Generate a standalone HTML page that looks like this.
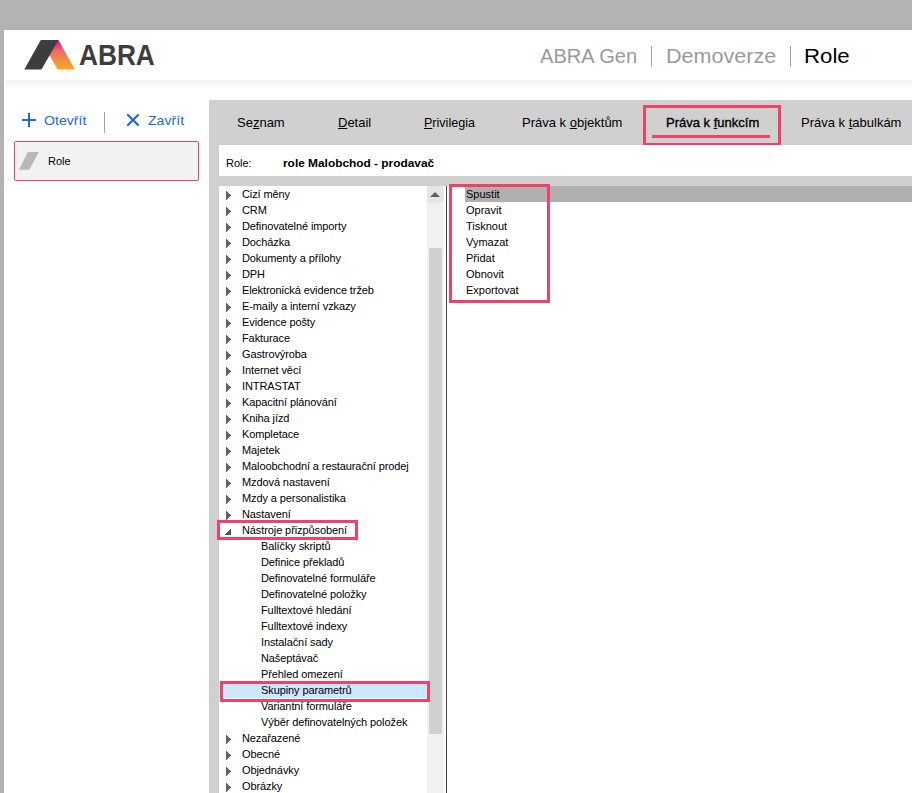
<!DOCTYPE html>
<html><head><meta charset="utf-8">
<style>
*{margin:0;padding:0;box-sizing:border-box}
html,body{width:912px;height:793px;overflow:hidden;background:#b3b3b3;font-family:"Liberation Sans",sans-serif}
.a{position:absolute;white-space:nowrap}
#main{position:absolute;left:4px;top:30px;width:908px;height:763px;background:#fff}
#shadow{position:absolute;left:5px;top:80px;width:907px;height:8px;background:linear-gradient(#f3f3f3,#fcfcfc)}
.hdr{font-size:19.5px;color:#9a9a9a;top:44px;line-height:24px;transform-origin:0 0}
.sep{position:absolute;width:1px;background:#9e9ec4}
.tb{font-size:13px;color:#1f6ad0;line-height:18px;top:111.5px;transform-origin:0 0;transform:scaleX(1.085)}
#panel{position:absolute;left:209px;top:100px;width:703px;height:693px;background:#d0d0d0}
.tab{font-size:13px;color:#000;line-height:16px;top:115px}
.tab u{text-decoration:underline;text-decoration-thickness:1px;text-underline-offset:1px}
.tree{position:absolute;left:219px;top:186px;width:227px;height:607px;background:#fff;overflow:hidden}
.row{position:absolute;left:0;height:16px;width:227px;font-size:11px;line-height:16px;color:#000;letter-spacing:-0.1px}
.row span{position:absolute;left:23px;top:0}
.row.c span{left:42px}
.tri{position:absolute;left:7px;top:5px;width:5px;height:9px;background:#636363;clip-path:polygon(0 0,1px 0,1px 1px,2px 1px,2px 2px,3px 2px,3px 3px,4px 3px,4px 4px,5px 4px,5px 5px,4px 5px,4px 6px,3px 6px,3px 7px,2px 7px,2px 8px,1px 8px,1px 9px,0 9px)}
.pink{position:absolute;border:3px solid #ee4368}
.etri{position:absolute;left:6px;top:7px;width:6px;height:6px;background:#555;clip-path:polygon(5px 0,6px 0,6px 6px,0 6px,0 5px,1px 5px,1px 4px,2px 4px,2px 3px,3px 3px,3px 2px,4px 2px,4px 1px,5px 1px)}
.sel{background:#cce8ff;width:208px}
.sb{position:absolute;left:208px;top:0;width:17px;height:607px;background:#f1f1f1}
.sbup{position:absolute;left:208px;top:0;width:17px;height:17px;background:#e6e6e6;border-radius:2px}
.sbarr{position:absolute;left:211px;top:6px;width:10px;height:5px;background:#606060;clip-path:polygon(50% 0,100% 100%,0 100%)}
.sbth{position:absolute;left:210px;top:62px;width:13px;height:486px;background:#d0d0d0;border-radius:1.5px}
.lst{position:absolute;left:447px;top:186px;width:465px;height:607px;background:#fff;overflow:hidden}
.lr{position:absolute;left:0;width:465px;height:16px;font-size:11px;line-height:16px;color:#000}
.lr span{position:absolute;left:19px;top:0}
</style></head><body>
<div id="main"></div>
<div id="shadow"></div>

<!-- logo -->
<svg class="a" style="left:0;top:0" width="160" height="80" viewBox="0 0 160 80">
  <defs><linearGradient id="g" x1="0" y1="0" x2="0" y2="1">
    <stop offset="0" stop-color="#e5007d"/><stop offset="0.35" stop-color="#ee6a6a"/><stop offset="1" stop-color="#f7ad1c"/></linearGradient></defs>
  <polygon points="41,40 58.4,40 75,69.6 57.6,69.6" fill="url(#g)"/>
  <polygon points="40.8,40 58.4,40 41.5,69.6 24.2,69.6" fill="#3d3d3d"/>
</svg>
<div class="a" style="left:79px;top:38px;font-size:30px;font-weight:bold;color:#3d3d3d;line-height:34px;transform-origin:0 0;transform:scaleX(0.875)">ABRA</div>

<div class="a hdr" style="left:540px;transform:scaleX(1.03)">ABRA Gen</div>
<div class="sep" style="left:651px;top:46px;height:21px"></div>
<div class="a hdr" style="left:666px;transform:scaleX(1.105)">Demoverze</div>
<div class="sep" style="left:790px;top:46px;height:21px"></div>
<div class="a hdr" style="left:803.5px;color:#000;transform:scaleX(1.14)">Role</div>

<!-- toolbar -->
<div class="a" style="left:22px;top:119px;width:14px;height:2px;background:#1f6ad0"></div>
<div class="a" style="left:28px;top:113px;width:2px;height:14px;background:#1f6ad0"></div>
<div class="a tb" style="left:44px">Otevřít</div>
<div class="sep" style="left:104px;top:112px;height:21px"></div>
<svg class="a" style="left:125px;top:112px" width="16" height="16" viewBox="0 0 16 16"><path d="M3 3L13 13M13 3L3 13" stroke="#1f6ad0" stroke-width="2.2" stroke-linecap="round"/></svg>
<div class="a tb" style="left:148px">Zavřít</div>

<div class="a" style="left:14px;top:141px;width:185px;height:40px;border:1px solid #ee4368;border-radius:2px;background:#f2f2f2"></div>
<svg class="a" style="left:19px;top:152px" width="20" height="18" viewBox="0 0 20 18"><polygon points="8.8,0 19.7,0 10.3,17.7 0,17.7" fill="#b8b8b8"/></svg>
<div class="a" style="left:48px;top:154px;font-size:11px;line-height:14px;color:#000">Role</div>

<!-- right panel -->
<div id="panel"></div>
<div class="a tab" style="left:237px">Se<u>z</u>nam</div>
<div class="a tab" style="left:338px"><u>D</u>etail</div>
<div class="a tab" style="left:424px;transform-origin:0 0;transform:scaleX(0.965)"><u>P</u>rivilegia</div>
<div class="a tab" style="left:522px">Práva k <u>o</u>bjektům</div>
<div class="a tab" style="left:666px;-webkit-text-stroke:0.35px #000">Práva k <u>f</u>unkcím</div>
<div class="a tab" style="left:801px">Práva k <u>t</u>abulkám</div>
<div class="pink" style="left:643px;top:105px;width:138px;height:41px"></div>
<div class="a" style="left:652px;top:135px;width:118px;height:3px;background:#ee4368"></div>

<div class="a" style="left:219px;top:145px;width:693px;height:31px;background:#fff"></div>
<div class="a" style="left:226px;top:156px;font-size:11px;line-height:14px">Role:</div>
<div class="a" style="left:283px;top:156px;font-size:11px;line-height:14px;font-weight:bold;transform-origin:0 0;transform:scaleX(1.08)">role Malobchod - prodavač</div>

<div class="tree" id="tree">
<div class="row" style="top:0px"><i class="tri"></i><span>Cizí měny</span></div>
<div class="row" style="top:16px"><i class="tri"></i><span>CRM</span></div>
<div class="row" style="top:32px"><i class="tri"></i><span>Definovatelné importy</span></div>
<div class="row" style="top:48px"><i class="tri"></i><span>Docházka</span></div>
<div class="row" style="top:64px"><i class="tri"></i><span>Dokumenty a přílohy</span></div>
<div class="row" style="top:80px"><i class="tri"></i><span>DPH</span></div>
<div class="row" style="top:96px"><i class="tri"></i><span>Elektronická evidence tržeb</span></div>
<div class="row" style="top:112px"><i class="tri"></i><span>E-maily a interní vzkazy</span></div>
<div class="row" style="top:128px"><i class="tri"></i><span>Evidence pošty</span></div>
<div class="row" style="top:144px"><i class="tri"></i><span>Fakturace</span></div>
<div class="row" style="top:160px"><i class="tri"></i><span>Gastrovýroba</span></div>
<div class="row" style="top:176px"><i class="tri"></i><span>Internet věcí</span></div>
<div class="row" style="top:192px"><i class="tri"></i><span>INTRASTAT</span></div>
<div class="row" style="top:208px"><i class="tri"></i><span>Kapacitní plánování</span></div>
<div class="row" style="top:224px"><i class="tri"></i><span>Kniha jízd</span></div>
<div class="row" style="top:240px"><i class="tri"></i><span>Kompletace</span></div>
<div class="row" style="top:256px"><i class="tri"></i><span>Majetek</span></div>
<div class="row" style="top:272px"><i class="tri"></i><span>Maloobchodní a restaurační prodej</span></div>
<div class="row" style="top:288px"><i class="tri"></i><span>Mzdová nastavení</span></div>
<div class="row" style="top:304px"><i class="tri"></i><span>Mzdy a personalistika</span></div>
<div class="row" style="top:320px"><i class="tri"></i><span>Nastavení</span></div>
<div class="row" style="top:336px"><i class="etri"></i><span>Nástroje přizpůsobení</span></div>
<div class="row c" style="top:352px"><span>Balíčky skriptů</span></div>
<div class="row c" style="top:368px"><span>Definice překladů</span></div>
<div class="row c" style="top:384px"><span>Definovatelné formuláře</span></div>
<div class="row c" style="top:400px"><span>Definovatelné položky</span></div>
<div class="row c" style="top:416px"><span>Fulltextové hledání</span></div>
<div class="row c" style="top:432px"><span>Fulltextové indexy</span></div>
<div class="row c" style="top:448px"><span>Instalační sady</span></div>
<div class="row c" style="top:464px"><span>Našeptávač</span></div>
<div class="row c" style="top:480px"><span>Přehled omezení</span></div>
<div class="row c sel" style="top:496px"><span>Skupiny parametrů</span></div>
<div class="row c" style="top:512px"><span>Variantní formuláře</span></div>
<div class="row c" style="top:528px"><span>Výběr definovatelných položek</span></div>
<div class="row" style="top:544px"><i class="tri"></i><span>Nezařazené</span></div>
<div class="row" style="top:560px"><i class="tri"></i><span>Obecné</span></div>
<div class="row" style="top:576px"><i class="tri"></i><span>Objednávky</span></div>
<div class="row" style="top:592px"><i class="tri"></i><span>Obrázky</span></div>
<div class="sb"></div><div class="sbup"></div><i class="sbarr"></i><div class="sbth"></div>
</div>
<div class="a" style="left:446px;top:186px;width:1px;height:607px;background:#444"></div>
<div class="lst">
<div class="a" style="left:18px;top:0;width:447px;height:16px;background:#b0b0b0"></div>
<div class="lr" style="top:0px"><span>Spustit</span></div>
<div class="lr" style="top:16px"><span>Opravit</span></div>
<div class="lr" style="top:32px"><span>Tisknout</span></div>
<div class="lr" style="top:48px"><span>Vymazat</span></div>
<div class="lr" style="top:64px"><span>Přidat</span></div>
<div class="lr" style="top:80px"><span>Obnovit</span></div>
<div class="lr" style="top:96px"><span>Exportovat</span></div>
</div>
<div class="pink" style="left:449px;top:184px;width:101px;height:119px"></div>
<div class="pink" style="left:217px;top:520px;width:141px;height:20px"></div>
<div class="pink" style="left:220px;top:681px;width:210px;height:21px"></div>


</body></html>
